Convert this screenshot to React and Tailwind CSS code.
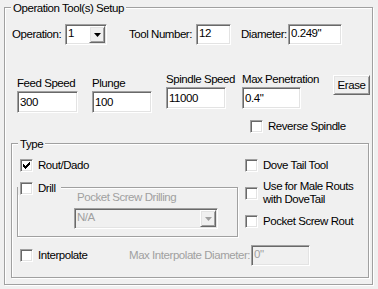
import React from "react";

// classic win32 bevels
const sunken =
  "border border-t-[#a0a0a0] border-l-[#a0a0a0] border-b-white border-r-white shadow-[inset_1px_1px_0_#696969,inset_-1px_-1px_0_#e3e3e3]";
const raised =
  "border border-t-white border-l-white border-b-[#696969] border-r-[#696969] shadow-[inset_1px_1px_0_#e3e3e3,inset_-1px_-1px_0_#a0a0a0]";
const etched = "border border-[#a0a0a0] shadow-[inset_1px_1px_0_#fff,1px_1px_0_#fff]";

// 7x7 check glyph, one 3px column per x
const CHECK_COLS = [2, 3, 4, 3, 2, 1, 0];

const Box = ({ checked }) => (
  <span className={`relative block w-[13px] h-[13px] shrink-0 bg-white ${sunken}`}>
    {checked && (
      <svg className="absolute left-[2px] top-[2px]" width="7" height="7" viewBox="0 0 7 7">
        {CHECK_COLS.map((y, x) => (
          <rect key={x} x={x} y={y} width="1" height="3" fill="#000" />
        ))}
      </svg>
    )}
  </span>
);

const Check = ({ label, checked, className = "" }) => (
  <div className={`flex items-center gap-[5px] ${className}`}>
    <Box checked={checked} />
    <span className="whitespace-nowrap">{label}</span>
  </div>
);

const Arrow = ({ disabled }) => (
  <svg width="7" height="4" viewBox="0 0 7 4">
    <path d="M0 0H7L3.5 4Z" fill={disabled ? "#a0a0a0" : "#000"} />
  </svg>
);

const Combo = ({ value, disabled, className = "" }) => (
  <div
    className={`flex p-[1px] ${sunken} ${
      disabled ? "bg-[#f0f0f0] text-[#a0a0a0]" : "bg-white"
    } ${className}`}
  >
    <span className="flex-1 pl-[1px] pt-[1px]">{value}</span>
    <span className={`w-[16px] flex items-center justify-center bg-[#f0f0f0] ${raised}`}>
      <Arrow disabled={disabled} />
    </span>
  </div>
);

const Field = ({ value, disabled, className = "" }) => (
  <div
    className={`pl-[2px] pt-[2px] whitespace-nowrap ${sunken} ${
      disabled ? "bg-[#f0f0f0] text-[#a0a0a0]" : "bg-white"
    } ${className}`}
  >
    {value}
  </div>
);

const LabeledField = ({ label, value, className = "" }) => (
  <div className={`flex flex-col ${className}`}>
    <span className="whitespace-nowrap">{label}</span>
    <Field value={value} className="mt-[1px] h-[22px] pt-[4px]" />
  </div>
);

export default function App() {
  return (
    <div className="w-[378px] h-[289px] overflow-hidden bg-[#f0f0f0] pl-[4px] pt-[7px] text-black font-['Liberation_Sans',Arial,sans-serif] text-[11.5px] leading-[13px] tracking-[-0.45px]">
      <div className={`relative w-[369px] h-[278px] ${etched}`}>
        <span className="absolute left-[6px] top-[-6px] px-[2px] bg-[#f0f0f0] whitespace-nowrap">
          Operation Tool(s) Setup
        </span>

        <div className="mt-[16px] h-[21px] flex items-center pl-[7px]">
          <span className="w-[53px]">Operation:</span>
          <Combo value="1" className="w-[42px] h-[21px]" />
          <span className="ml-[22px] w-[67px] whitespace-nowrap">Tool Number:</span>
          <Field value="12" className="w-[35px] h-[21px]" />
          <span className="ml-[10px] w-[47px]">Diameter:</span>
          <Field value={'0.249"'} className="w-[54px] h-[21px]" />
        </div>

        <div className="h-[68px] flex items-start">
          <LabeledField label="Feed Speed" value="300" className="ml-[12px] mt-[32px] w-[61px]" />
          <LabeledField label="Plunge" value="100" className="ml-[14px] mt-[32px] w-[60px]" />
          <LabeledField label="Spindle Speed" value="11000" className="ml-[14px] mt-[28px] w-[60px]" />
          <LabeledField label="Max Penetration" value={'0.4"'} className="ml-[16px] mt-[28px] w-[59px]" />
          <button
            className={`ml-[32px] mt-[30px] w-[37px] h-[20px] bg-[#f0f0f0] flex items-center justify-center ${raised}`}
          >
            Erase
          </button>
        </div>

        <Check label="Reverse Spindle" className="mt-[7px] h-[13px] pl-[245px]" />

        <div className={`relative ml-[6px] mt-[10px] w-[358px] h-[135px] ${etched}`}>
          <span className="absolute left-[6px] top-[-6px] px-[2px] bg-[#f0f0f0]">Type</span>

          <div className="flex items-start">
            <div className="w-[227px]">
              <Check label="Rout/Dado" checked className="mt-[15px] h-[13px] pl-[8px]" />
              <div className={`relative ml-[5px] mt-[15px] w-[221px] h-[50px] ${etched}`}>
                <div className="absolute left-0 top-[-6px] pl-[2px] pr-[5px] bg-[#f0f0f0]">
                  <Check label="Drill" />
                </div>
                <div className="ml-[59px] mt-[3px] text-[#a0a0a0]">Pocket Screw Drilling</div>
                <Combo disabled value="N/A" className="ml-[56px] mt-[4px] w-[144px] h-[21px]" />
              </div>
            </div>

            <div className="ml-[6px]">
              <Check label="Dove Tail Tool" className="mt-[15px] h-[13px]" />
              <Check
                label={
                  <>
                    Use for Male Routs
                    <br />
                    with DoveTail
                  </>
                }
                className="mt-[8px]"
              />
              <Check label="Pocket Screw Rout" className="mt-[9px] h-[13px]" />
            </div>
          </div>

          <div className="mt-[8px] h-[21px] flex items-center pl-[8px]">
            <Box />
            <span className="ml-[5px] w-[91px]">Interpolate</span>
            <span className="w-[122px] text-[#a0a0a0] whitespace-nowrap">Max Interpolate Diameter:</span>
            <Field value={'0"'} disabled className="w-[59px] h-[21px]" />
          </div>
        </div>
      </div>
    </div>
  );
}
